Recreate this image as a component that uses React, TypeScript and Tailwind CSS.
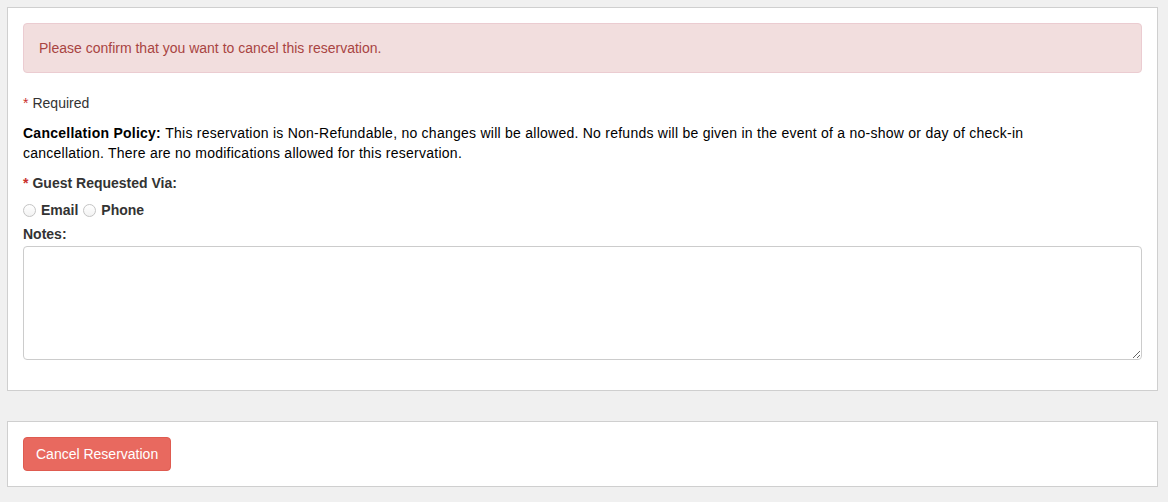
import React from "react";

const Req = () => <span className="text-[#c9302c] mr-1">*</span>;

const Radio = ({ label }: { label: string }) => (
  <label className="flex items-center gap-[5px] mr-[5px]">
    <span className="w-[13px] h-[13px] rounded-full border border-[#c4c4c4] bg-gradient-to-b from-white to-[#f3f3f3]" />
    <span className="font-bold text-[#333]">{label}</span>
  </label>
);

export default function App() {
  return (
    <div
      className="min-h-[502px] bg-[#f0f0f0] pl-[7px] pr-[10px] pt-[7px] pb-[14px] text-[14px] leading-[20px] text-[#333]"
      style={{ fontFamily: '"Liberation Sans", Arial, sans-serif' }}
    >
      <div className="bg-white border border-[#cfcfcf] p-[15px]">
        <div className="bg-[#f2dede] border border-[#ebccd1] rounded-[4px] text-[#a94442] px-[15px] py-[14px]">
          Please confirm that you want to cancel this reservation.
        </div>

        <p className="mt-[20px] mb-[10px]">
          <Req />
          Required
        </p>

        <p className="text-black tracking-[0.25px] mb-[10px]">
          <span className="font-bold">Cancellation Policy: </span>This reservation is Non-Refundable, no
          changes will be allowed. No refunds will be given in the event of a no-show or day of
          check-in
          <br />
          cancellation. There are no modifications allowed for this reservation.
        </p>

        <div className="font-bold">
          <Req />
          Guest Requested Via:
        </div>

        <div className="flex items-center mt-[7px] h-[20px]">
          <Radio label="Email" />
          <Radio label="Phone" />
        </div>

        <div className="font-bold mt-[4px] mb-[2px]">Notes:</div>

        <textarea className="block w-full h-[114px] border border-[#ccc] rounded-[4px] bg-white mb-[15px] resize-y outline-none" />
      </div>

      <div className="mt-[30px] bg-white border border-[#cfcfcf] p-[15px]">
        <button className="h-[34px] px-[12px] rounded-[4px] bg-[#e8695f] border border-[#df5b50] text-white">
          Cancel Reservation
        </button>
      </div>
    </div>
  );
}
